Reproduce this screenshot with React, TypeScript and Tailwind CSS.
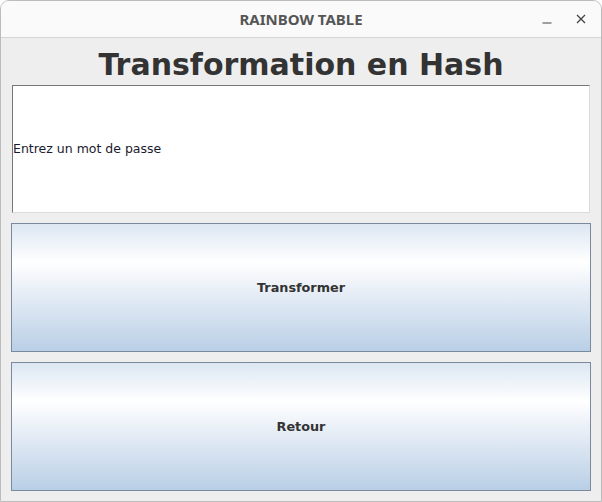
import React from 'react';

const dejavu = { fontFamily: '"DejaVu Sans", Verdana, sans-serif' };

const GradientButton = ({ label }: { label: string }) => (
    <button
        className="h-[129px] w-full shrink-0 border border-[#7a8a9c] bg-[linear-gradient(to_bottom,#dce7f3_0%,#ffffff_30%,#e6edf6_55%,#b9cfe6_100%)] text-[12.8px] font-bold text-[#333333]"
        style={dejavu}
    >
        {label}
    </button>
);

export default function App() {
    return (
        <div className="flex h-[502px] w-[602px] flex-col overflow-hidden rounded-t-[9px] border border-[#bcbcbc] bg-[#eeeeee]">
            <div className="relative flex h-[37px] shrink-0 items-center justify-center border-b border-[#d4d4d4] bg-[#fafafa]">
                <span className="text-[15px] font-bold text-[#555555]" style={{ fontFamily: '"Noto Sans", "Open Sans", sans-serif' }}>
                    RAINBOW TABLE
                </span>
                <div className="absolute right-[14px] top-0 flex h-full items-center gap-[22px] text-[#444444]">
                    <svg width="12" height="12" viewBox="0 0 12 12" className="mt-[2px]">
                        <path d="M1.5 9h9" stroke="currentColor" strokeWidth="1.2" />
                    </svg>
                    <svg width="12" height="12" viewBox="0 0 12 12">
                        <path d="M2 2l8 8M10 2l-8 8" stroke="currentColor" strokeWidth="1.3" />
                    </svg>
                </div>
            </div>
            <div className="flex flex-1 flex-col px-[10px]">
                <div className="flex h-[47px] shrink-0 items-center justify-center pt-[6px]">
                    <h1 className="text-[30px] font-bold leading-none text-[#333333]" style={dejavu}>
                        Transformation en Hash
                    </h1>
                </div>
                <div className="mx-[1px] flex h-[128px] shrink-0 items-center border-b border-l border-r border-t border-b-[#dadada] border-l-[#777777] border-r-[#dadada] border-t-[#777777] bg-white">
                    <span className="text-[12.5px] text-[#1a1a2e]" style={dejavu}>
                        Entrez un mot de passe
                    </span>
                </div>
                <div className="mt-[10px] flex flex-col gap-[10px]">
                    <GradientButton label="Transformer" />
                    <GradientButton label="Retour" />
                </div>
            </div>
        </div>
    );
}
